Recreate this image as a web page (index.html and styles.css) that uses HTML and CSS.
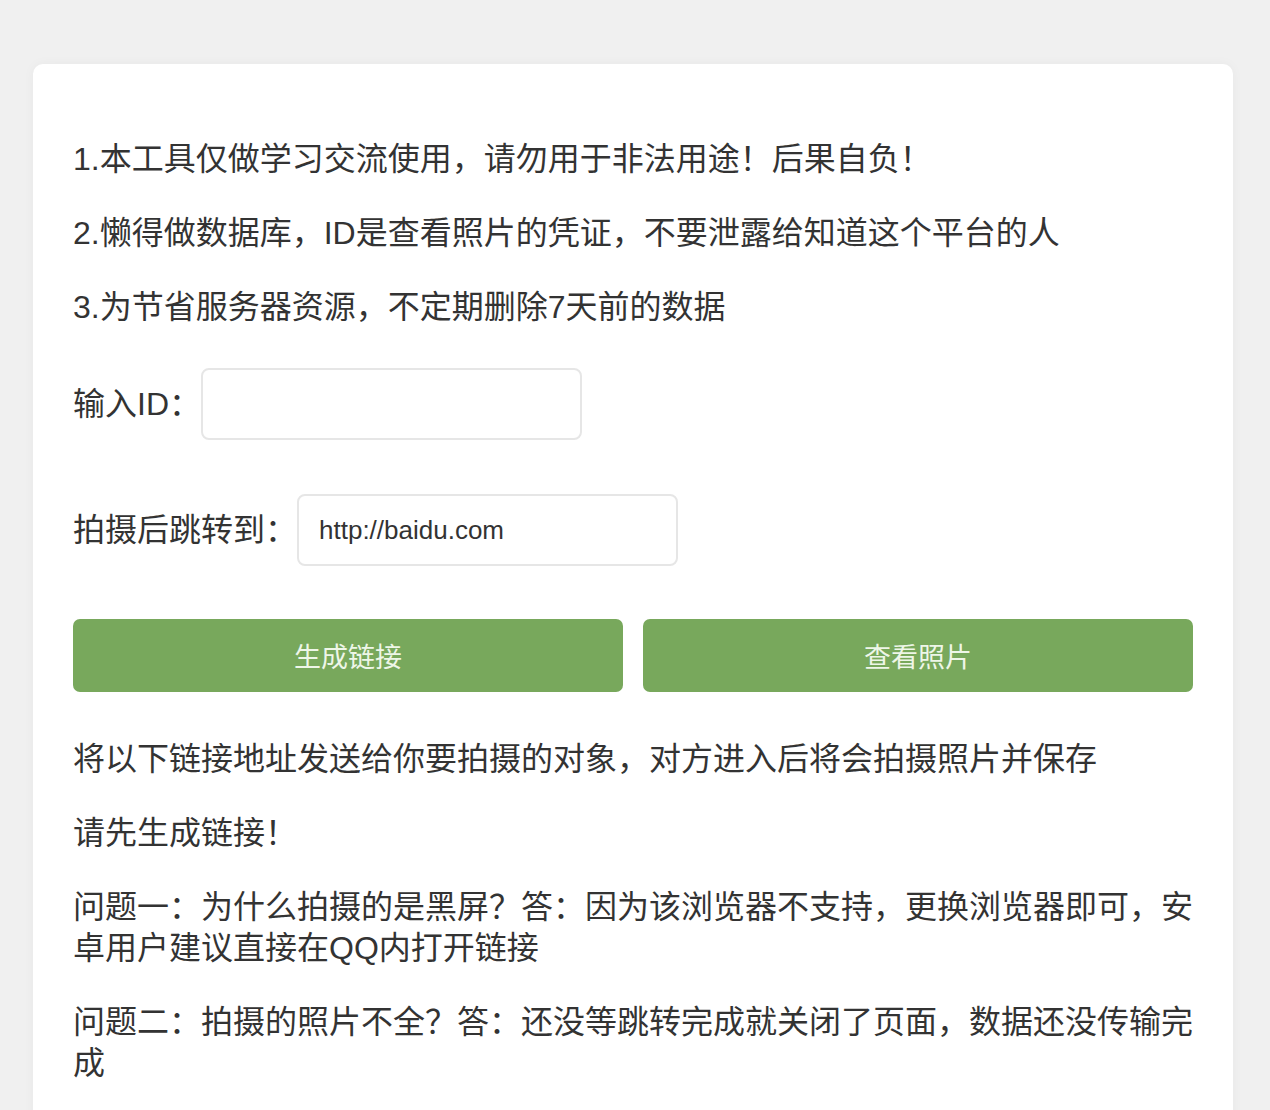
FILE: index.html
```html
<!DOCTYPE html>
<html lang="zh-CN">
<head>
  <meta charset="UTF-8" />
  <title>拍照工具</title>
  <link rel="stylesheet" href="styles.css">
</head>
<body>
  <div class="card">
    <p>1.本工具仅做学习交流使用，请勿用于非法用途！后果自负！</p>
    <p>2.懒得做数据库，ID是查看照片的凭证，不要泄露给知道这个平台的人</p>
    <p>3.为节省服务器资源，不定期删除7天前的数据</p>

    <div class="field first">
      <label for="uid">输入ID：</label>
      <input type="text" id="uid">
    </div>
    <div class="field second">
      <label for="jump">拍摄后跳转到：</label>
      <input type="text" id="jump" value="http://baidu.com">
    </div>

    <div class="actions">
      <button class="btn">生成链接</button>
      <button class="btn">查看照片</button>
    </div>

    <p class="after">将以下链接地址发送给你要拍摄的对象，对方进入后将会拍摄照片并保存</p>
    <p>请先生成链接！</p>
    <p>问题一：为什么拍摄的是黑屏？答：因为该浏览器不支持，更换浏览器即可，安卓用户建议直接在QQ内打开链接</p>
    <p>问题二：拍摄的照片不全？答：还没等跳转完成就关闭了页面，数据还没传输完成</p>
  </div>
</body>
</html>
```

FILE: styles.css
```css
html, body {
  margin: 0;
  background: #f0f0f0;
}
body {
  padding: 64px 37px 0 33px;
  font-family: "Liberation Sans", "Noto Sans CJK SC", sans-serif;
  color: #333;
}
.card {
  background: #fff;
  border-radius: 10px;
  padding: 42px 40px 40px;
  box-shadow: 0 0 12px rgba(0,0,0,0.04);
}
.card p {
  margin: 33px 0;
  font-size: 32px;
  line-height: 41px;
}
.field {
  display: flex;
  align-items: center;
}
.field.first {
  margin-top: 40px;
}
.field.second {
  margin-top: 54px;
}
.field label {
  font-size: 32px;
  line-height: 41px;
  color: #333;
}
.field input {
  width: 381px;
  height: 72px;
  box-sizing: border-box;
  border: 2px solid #e6e6e6;
  border-radius: 8px;
  padding: 0 20px;
  font-family: "Liberation Sans", sans-serif;
  font-size: 26px;
  color: #333;
  outline: none;
}
.actions {
  display: flex;
  gap: 20px;
  margin-top: 53px;
  margin-bottom: 47px;
}
.btn {
  flex: 1;
  height: 73px;
  border: none;
  border-radius: 7px;
  background: #78a85c;
  color: #eef6e8;
  font-family: "Noto Sans CJK SC", sans-serif;
  font-size: 27px;
}
.card p.after {
  margin-top: 47px;
}
```
